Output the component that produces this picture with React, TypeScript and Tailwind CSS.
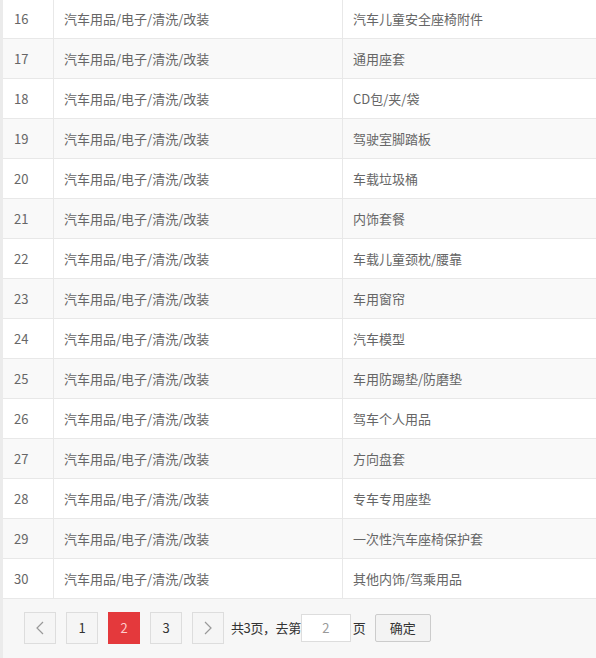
const rows: [number, string][] = [
  [16, "汽车儿童安全座椅附件"],
  [17, "通用座套"],
  [18, "CD包/夹/袋"],
  [19, "驾驶室脚踏板"],
  [20, "车载垃圾桶"],
  [21, "内饰套餐"],
  [22, "车载儿童颈枕/腰靠"],
  [23, "车用窗帘"],
  [24, "汽车模型"],
  [25, "车用防踢垫/防磨垫"],
  [26, "驾车个人用品"],
  [27, "方向盘套"],
  [28, "专车专用座垫"],
  [29, "一次性汽车座椅保护套"],
  [30, "其他内饰/驾乘用品"],
]

function ChevronLeft() {
  return (
    <svg width="8" height="14" viewBox="0 0 8 14" fill="none">
      <path d="M7 1 1 7l6 6" stroke="#999" strokeWidth="1.2" />
    </svg>
  )
}

function ChevronRight() {
  return (
    <svg width="8" height="14" viewBox="0 0 8 14" fill="none">
      <path d="M1 1l6 6-6 6" stroke="#999" strokeWidth="1.2" />
    </svg>
  )
}

export default function App() {
  return (
    <div
      className="w-[596px] h-[658px] overflow-hidden flex bg-white text-[13px] text-[#666]"
      style={{ fontFamily: '"Microsoft YaHei", "Noto Sans CJK SC", sans-serif' }}
    >
      <div className="w-[3px] shrink-0 bg-[#ebebeb]" />
      <div className="flex-1 flex flex-col">
        <div className="-mt-[1px]">
          {rows.map(([n, name], i) => (
            <div
              key={n}
              className={`flex h-[40px] border-b border-[#e8e8e8] ${i % 2 === 1 ? "bg-[#f9f9f9]" : "bg-white"}`}
            >
              <div className="w-[51px] shrink-0 flex items-center pl-[11px] border-r border-[#e8e8e8]">{n}</div>
              <div className="w-[289px] shrink-0 flex items-center pl-[10px] border-r border-[#e8e8e8]">
                汽车用品/电子/清洗/改装
              </div>
              <div className="flex-1 flex items-center pl-[10px]">{name}</div>
            </div>
          ))}
        </div>
        <div className="flex-1 bg-[#f7f7f7] flex items-center pl-[21px] pb-[2px]">
          <div className="flex items-center gap-[10px]">
            <button className="w-[32px] h-[32px] flex items-center justify-center border border-[#ddd] bg-[#f5f5f5]">
              <ChevronLeft />
            </button>
            <button className="w-[32px] h-[32px] flex items-center justify-center border border-[#ddd] bg-[#f5f5f5] text-[#333]">
              1
            </button>
            <button className="w-[32px] h-[32px] flex items-center justify-center bg-[#e4393c] text-[#fcc]">
              2
            </button>
            <button className="w-[32px] h-[32px] flex items-center justify-center border border-[#ddd] bg-[#f5f5f5] text-[#333]">
              3
            </button>
            <button className="w-[32px] h-[32px] flex items-center justify-center border border-[#ddd] bg-[#f5f5f5]">
              <ChevronRight />
            </button>
          </div>
          <span className="ml-[7px] text-[#333] tracking-[-0.4px]">共3页，去第</span>
          <input
            readOnly
            value="2"
            className="w-[50px] h-[28px] border border-[#ddd] bg-white text-center text-[#999] outline-none"
          />
          <span className="ml-[2px] text-[#333]">页</span>
          <button className="ml-[9px] w-[56px] h-[28px] border border-[#ccc] bg-[#f3f3f3] rounded-[2px] text-[#333]">
            确定
          </button>
        </div>
      </div>
    </div>
  )
}
